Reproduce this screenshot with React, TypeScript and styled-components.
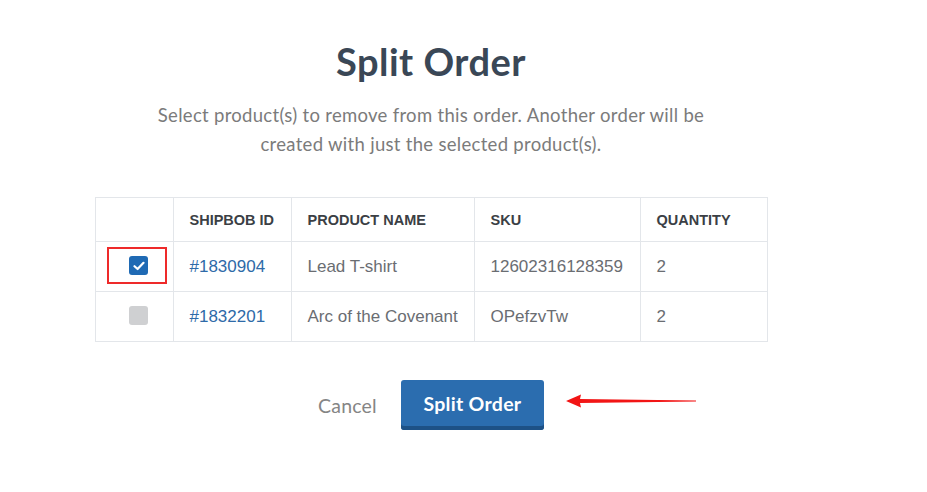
import styled, { createGlobalStyle } from 'styled-components';

const rows = [
  { id: '#1830904', name: 'Lead T-shirt', sku: '12602316128359', qty: 2, checked: true },
  { id: '#1832201', name: 'Arc of the Covenant', sku: 'OPefzvTw', qty: 2, checked: false },
];

export default function App() {
  return (
    <>
      <GlobalStyle />
      <Page>
        <Title>Split Order</Title>
        <Subtitle>
          Select product(s) to remove from this order. Another order will be
          <br />
          created with just the selected product(s).
        </Subtitle>
        <Table>
          <thead>
            <tr>
              <HeadCell $width={78} />
              <HeadCell $width={118}>SHIPBOB ID</HeadCell>
              <HeadCell $width={183}>PRODUCT NAME</HeadCell>
              <HeadCell $width={166}>SKU</HeadCell>
              <HeadCell $width={127}>QUANTITY</HeadCell>
            </tr>
          </thead>
          <tbody>
            {rows.map((row) => (
              <tr key={row.id}>
                <CheckCell>
                  <CheckWrap $highlight={row.checked}>
                    <Check $checked={row.checked}>
                      {row.checked && (
                        <svg width="12" height="10" viewBox="0 0 12 10">
                          <path d="M1.5 5.2 L4.6 8 L10.5 1.8" fill="none" stroke="#fff" strokeWidth="2.2" strokeLinecap="round" strokeLinejoin="round" />
                        </svg>
                      )}
                    </Check>
                  </CheckWrap>
                </CheckCell>
                <Cell>
                  <IdLink>{row.id}</IdLink>
                </Cell>
                <Cell>{row.name}</Cell>
                <Cell>{row.sku}</Cell>
                <Cell>{row.qty}</Cell>
              </tr>
            ))}
          </tbody>
        </Table>
        <Actions>
          <CancelButton>Cancel</CancelButton>
          <SplitButton>Split Order</SplitButton>
          <Arrow width="132" height="16" viewBox="0 0 132 16">
            <path d="M0 8 L15 1.5 L14 6 L130 7.4 L130 8.6 L14 10 L15 14.5 Z" fill="#f21515" />
          </Arrow>
        </Actions>
      </Page>
    </>
  );
}

const GlobalStyle = createGlobalStyle`
  html, body {
    margin: 0;
    background: #ffffff;
  }
`;

const Page = styled.div`
  width: 672px;
  margin-left: 95px;
  display: flex;
  flex-direction: column;
  align-items: center;
  padding-top: 37px;
`;

const Title = styled.h1`
  margin: 0;
  font-family: Lato, 'Noto Sans', sans-serif;
  font-weight: 700;
  font-size: 38px;
  letter-spacing: 0.5px;
  line-height: 48px;
  color: #3a4756;
`;

const Subtitle = styled.p`
  margin: 16px 0 0;
  font-family: Lato, 'Noto Sans', sans-serif;
  font-size: 18.5px;
  letter-spacing: 0.3px;
  line-height: 29px;
  color: #7b7b7b;
  text-align: center;
  white-space: nowrap;
`;

const Table = styled.table`
  margin-top: 38px;
  width: 672px;
  border-collapse: collapse;
  table-layout: fixed;
  font-family: 'Liberation Sans', Arial, sans-serif;
`;

const HeadCell = styled.th<{ $width?: number }>`
  width: ${(p) => p.$width}px;
  height: 44px;
  padding: 0 16px;
  border: 1px solid #e3e6ea;
  text-align: left;
  font-size: 14.5px;
  font-weight: 700;
  color: #3b3f45;
  box-sizing: border-box;
`;

const Cell = styled.td`
  height: 50px;
  padding: 0 14px 0 16px;
  border: 1px solid #e3e6ea;
  font-size: 17px;
  color: #6a6d72;
  white-space: nowrap;
  box-sizing: border-box;
`;

const CheckCell = styled(Cell)`
  padding: 0 0 2px 11px;
`;

const CheckWrap = styled.div<{ $highlight?: boolean }>`
  width: 60px;
  height: 37px;
  box-sizing: border-box;
  border: 2px solid ${(p) => (p.$highlight ? '#ee2a2a' : 'transparent')};
  display: flex;
  align-items: center;
  justify-content: center;
  padding-left: 4px;
`;

const Check = styled.span<{ $checked?: boolean }>`
  width: 19px;
  height: 19px;
  border-radius: 3px;
  background: ${(p) => (p.$checked ? '#1f6ab4' : '#cfd0d2')};
  display: flex;
  align-items: center;
  justify-content: center;
`;

const IdLink = styled.a`
  color: #2e6aa8;
  text-decoration: none;
`;

const Actions = styled.div`
  position: relative;
  margin-top: 38px;
  display: flex;
  align-items: center;
  gap: 24px;
`;

const CancelButton = styled.button`
  border: none;
  background: none;
  padding: 0;
  font-family: Lato, 'Noto Sans', sans-serif;
  font-size: 19.5px;
  letter-spacing: 0.2px;
  color: #858585;
`;

const SplitButton = styled.button`
  width: 143px;
  height: 50px;
  border: none;
  border-radius: 3px;
  background: #2b6daf;
  box-shadow: inset 0 -4px 0 #1d5186;
  padding-bottom: 4px;
  font-family: Lato, 'Noto Sans', sans-serif;
  font-weight: 700;
  font-size: 19.5px;
  letter-spacing: 0.3px;
  color: #ffffff;
`;

const Arrow = styled.svg`
  position: absolute;
  left: 100%;
  top: 13px;
  margin-left: 22px;
`;
